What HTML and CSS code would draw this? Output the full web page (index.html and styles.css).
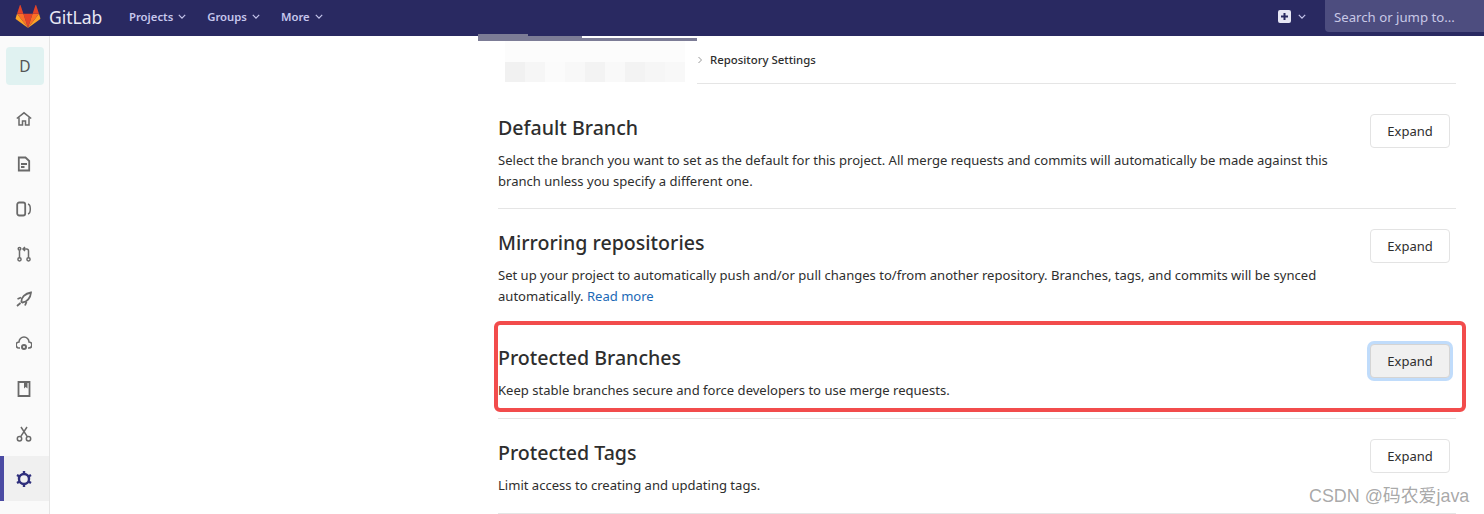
FILE: index.html
```html
<!DOCTYPE html>
<html lang="en">
<head>
    <meta charset="UTF-8">
    <title>Repository Settings</title>
    <link rel="stylesheet" href="styles.css">
</head>
<body>
    <header class="navbar">
        <div class="brand">
            <svg class="logo" viewBox="0 0 36 36" width="26" height="25">
                <path fill="#e24329" d="M18 34.500 24.600 14.200H11.400z"/>
                <path fill="#fc6d26" d="M18 34.500 11.400 14.200H2.200z"/>
                <path fill="#fca326" d="M2.200 14.200.2 20.400c-.2.600 0 1.200.5 1.500L18 34.500z"/>
                <path fill="#e24329" d="M2.200 14.200h9.200L7.400 2c-.2-.6-1.100-.6-1.300 0z"/>
                <path fill="#fc6d26" d="M18 34.500 24.600 14.200h9.200z"/>
                <path fill="#fca326" d="M33.800 14.200l2 6.200c.2.600 0 1.200-.5 1.500L18 34.500z"/>
                <path fill="#e24329" d="M33.800 14.200h-9.200L28.600 2c.2-.6 1.100-.6 1.300 0z"/>
            </svg>
            <span class="brand-name">GitLab</span>
        </div>
        <nav class="nav-links">
            <a class="nav-link">Projects <svg class="chev" viewBox="0 0 10 6"><path d="M1 1l4 4 4-4"/></svg></a>
            <a class="nav-link">Groups <svg class="chev" viewBox="0 0 10 6"><path d="M1 1l4 4 4-4"/></svg></a>
            <a class="nav-link">More <svg class="chev" viewBox="0 0 10 6"><path d="M1 1l4 4 4-4"/></svg></a>
        </nav>
        <div class="nav-right">
            <div class="new-menu">
                <svg class="plus" viewBox="0 0 13 13" width="13" height="13"><path fill-rule="evenodd" fill="#e6e6f4" d="M2 0h9a2 2 0 0 1 2 2v9a2 2 0 0 1-2 2H2a2 2 0 0 1-2-2V2a2 2 0 0 1 2-2zm3.500 3v2.500H3v2h2.500V10h2V7.500H10v-2H7.500V3z"/></svg>
                <svg class="chev" viewBox="0 0 10 6"><path d="M1 1l4 4 4-4"/></svg>
            </div>
            <div class="search">Search or jump to...</div>
        </div>
    </header>

    <div class="page">
        <aside class="sidebar">
            <div class="avatar">D</div>
            <ul class="side-list">
                <li class="side-item">
                    <svg viewBox="0 0 16 16"><path d="M.8 7.500 8 1.800l7.200 5.700M3 6.500V14h3.500v-4h3v4H13V6.500"/></svg>
                </li>
                <li class="side-item">
                    <svg viewBox="0 0 16 16"><path d="M2.800 1.500h6.700L13.200 5v9.500H2.800zM5 8h6M5 11h3.500" stroke-width="1.800"/></svg>
                </li>
                <li class="side-item">
                    <svg viewBox="0 0 16 16"><rect x="1.200" y="1.500" width="8" height="13" rx="2" stroke-width="1.800"/><path d="M12 3c1.800.5 2.300 2 2.300 5s-.5 4.500-2.300 5"/></svg>
                </li>
                <li class="side-item">
                    <svg viewBox="0 0 16 16"><circle cx="3.500" cy="13.300" r="1.600"/><circle cx="12.500" cy="13.300" r="1.600"/><circle cx="3.500" cy="2.800" r="1.300"/><path d="M3.500 4.300v7.400M12.500 11.700V5a2 2 0 0 0-2-2H7M9 1 7 3l2 2"/></svg>
                </li>
                <li class="side-item">
                    <svg viewBox="0 0 16 16"><path d="M5.500 11C5 6.500 9 2.500 15 1.500 14.500 7 11 11 6.500 11.500zM5 6.500 1.500 8M10.500 11l-1.500 3.500M1 15l3.500-3" stroke-width="1.800"/></svg>
                </li>
                <li class="side-item">
                    <svg viewBox="0 0 16 16"><path d="M4 12H3.300a3 3 0 0 1-.3-6A5 5 0 0 1 13 6a3 3 0 0 1-.3 6H12"/><circle cx="8" cy="11" r="2" stroke-width="2"/></svg>
                </li>
                <li class="side-item">
                    <svg viewBox="0 0 16 16"><path d="M2.500 1h11v14h-11z" stroke-width="1.800"/><path class="solid" d="M8 1h3.500v6.500L9.700 6 8 7.500z"/></svg>
                </li>
                <li class="side-item">
                    <svg viewBox="0 0 16 16"><circle cx="3.500" cy="12.700" r="2.200"/><circle cx="12.500" cy="12.700" r="2.200"/><path d="M4.700 10.700 11 1M11.300 10.700 5 1"/></svg>
                </li>
                <li class="side-item active">
                    <svg viewBox="0 0 16 16"><circle cx="8" cy="8" r="5"/><path d="M8 0v3M8 13v3M1 4l2.500 1.500M12.500 10.500 15 12M1 12l2.500-1.500M12.500 5.500 15 4"/></svg>
                </li>
            </ul>
        </aside>

        <main class="content">
            <div class="crumbs">
                <svg class="crumb-arrow" viewBox="0 0 6 8"><path d="M1.500 1l3 3-3 3"/></svg>
                <span class="crumb-text">Repository Settings</span>
            </div>

            <section class="settings tall first">
                <div class="settings-text">
                    <h4>Default Branch</h4>
                    <p>Select the branch you want to set as the default for this project. All merge requests and commits will automatically be made against this branch unless you specify a different one.</p>
                </div>
                <button class="btn">Expand</button>
            </section>

            <section class="settings tall">
                <div class="settings-text">
                    <h4>Mirroring repositories</h4>
                    <p>Set up your project to automatically push and/or pull changes to/from another repository. Branches, tags, and commits will be synced automatically. <a class="link">Read more</a></p>
                </div>
                <button class="btn">Expand</button>
            </section>

            <section class="settings">
                <div class="settings-text">
                    <h4>Protected Branches</h4>
                    <p>Keep stable branches secure and force developers to use merge requests.</p>
                </div>
                <button class="btn focused">Expand</button>
            </section>

            <section class="settings">
                <div class="settings-text">
                    <h4>Protected Tags</h4>
                    <p>Limit access to creating and updating tags.</p>
                </div>
                <button class="btn">Expand</button>
            </section>
        </main>
    </div>

    <!-- things painted over the screenshot -->
    <div class="redact">
        <div class="redact-line a"></div>
        <div class="redact-line b"></div>
        <div class="redact-line c"></div>
        <div class="mosaic"></div>
    </div>
    <div class="highlight"></div>
    <div class="watermark">CSDN @码农爱java</div>
</body>
</html>
```

FILE: styles.css
```css
*{
    margin: 0;
    padding: 0;
    box-sizing: border-box;
}

html, body{
    height: 514px;
    overflow: hidden;
}

body{
    position: relative;
    background-color: #fff;
    color: #2e2e2e;
    font-family: "Noto Sans", "Open Sans", sans-serif;
    font-size: 13px;
}

.navbar{
    display: flex;
    align-items: center;
    height: 36px;
    background-color: #292961;
}

.brand{
    display: flex;
    align-items: center;
    width: 129px;
    padding: 0 0 3px 15px;
}

.brand-name{
    margin-left: 8px;
    font-size: 17.500px;
    color: #e8e8f4;
}

.nav-links{
    display: flex;
    gap: 21px;
    padding-bottom: 3px;
}

.nav-link{
    display: flex;
    align-items: center;
    gap: 5px;
    font-size: 11.300px;
    font-weight: 600;
    color: #c6c6ec;
}

.chev{
    width: 8px;
    height: 5px;
    fill: none;
    stroke: #c6c6ec;
    stroke-width: 1.500;
}

.nav-right{
    display: flex;
    align-items: center;
    align-self: flex-start;
    margin-left: auto;
    height: 32px;
}

.new-menu{
    display: flex;
    align-items: center;
    gap: 7px;
    margin-right: 19px;
}

.search{
    width: 159px;
    height: 32px;
    padding-left: 9px;
    border-radius: 0 0 0 4px;
    background-color: #4d4d7f;
    color: #c8c8e6;
    font-size: 13.200px;
    line-height: 34px;
}

.page{
    display: flex;
    height: 478px;
}

.sidebar{
    width: 50px;
    flex-shrink: 0;
    background-color: #fafafa;
    border-right: 1px solid #e5e5e5;
}

.avatar{
    display: flex;
    align-items: center;
    justify-content: center;
    width: 38px;
    height: 38px;
    margin: 11px 0 0 6px;
    border-radius: 4px;
    background-color: #e0f2f1;
    color: #555;
    font-size: 15.500px;
}

.side-list{
    list-style: none;
    margin-top: 11px;
}

.side-item{
    display: flex;
    align-items: center;
    justify-content: center;
    height: 45px;
    padding-right: 1px;
}

.side-item svg{
    width: 16px;
    height: 16px;
    fill: none;
    stroke: #6a6a6a;
    stroke-width: 1.500;
}

.side-item .solid{
    fill: #6a6a6a;
    stroke: none;
}

.side-item.active{
    background-color: #f0f0f0;
    border-left: 4px solid #4b4ba3;
    padding-right: 5px;
}

.side-item.active svg{
    stroke: #2f2f7c;
    stroke-width: 2.400;
}

.content{
    width: 958px;
    margin-left: 448px;
}

.crumbs{
    display: flex;
    align-items: center;
    height: 48px;
    padding-left: 199px;
    border-bottom: 1px solid #e5e5e5;
    font-size: 11.400px;
    font-weight: 500;
}

.crumb-arrow{
    width: 6px;
    height: 8px;
    margin-right: 7px;
    fill: none;
    stroke: #999;
}

.settings{
    display: flex;
    justify-content: space-between;
    align-items: flex-start;
    height: 95px;
    padding-top: 20px;
    border-bottom: 1px solid #e5e5e5;
}

.settings.tall{
    height: 115px;
}

.settings.first{
    margin-top: 10px;
}

.settings-text{
    width: 850px;
}

.settings h4{
    height: 30px;
    font-size: 19.600px;
    font-weight: 500;
    line-height: 28px;
    color: #2e2e2e;
}

.settings p{
    margin-top: 6px;
    font-size: 13.050px;
    line-height: 21px;
}

.link{
    color: #1b69b6;
}

.btn{
    width: 80px;
    height: 34px;
    margin-right: 6px;
    border: 1px solid #e3e3e3;
    border-radius: 4px;
    background-color: #fff;
    color: #2e2e2e;
    font-family: inherit;
    font-size: 13px;
}

.btn.focused{
    background-color: #f0f0f0;
    box-shadow: 0 0 0 3px #c0dcfb;
    border-color: #d4d4d4;
}

.redact{
    position: absolute;
    left: 478px;
    top: 34px;
    width: 219px;
    height: 50px;
}

.redact-line{
    position: absolute;
    left: 0;
    background-color: #7c7c96;
}

.redact-line.a{
    top: 0;
    width: 50px;
    height: 7px;
}

.redact-line.b{
    top: 2px;
    width: 104px;
    height: 5px;
}

.redact-line.c{
    top: 4px;
    width: 219px;
    height: 3px;
}

.mosaic{
    position: absolute;
    top: 7px;
    left: 0;
    width: 219px;
    height: 43px;
    background-color: #fff;
    background-image:
        linear-gradient(90deg, #fff 27px, #f1f1f1 27px, #f1f1f1 47px, #f6f6f6 47px, #f6f6f6 67px, #fbfbfb 67px, #fbfbfb 87px, #f8f8f8 87px, #f8f8f8 107px, #f3f3f3 107px, #f3f3f3 127px, #f9f9f9 127px, #f9f9f9 147px, #f3f3f3 147px, #f3f3f3 167px, #f6f6f6 167px, #f6f6f6 187px, #f8f8f8 187px, #f8f8f8 207px, #fff 207px),
        linear-gradient(90deg, #fff 27px, #fcfcfc 27px, #fcfcfc 207px, #fff 207px);
    background-size: 100% 20px, 100% 21px;
    background-position: 0 21px, 0 0;
    background-repeat: no-repeat;
}

.highlight{
    position: absolute;
    left: 494px;
    top: 321px;
    width: 972px;
    height: 91px;
    border: 4px solid #f24c4c;
    border-radius: 6px;
}

.watermark{
    position: absolute;
    left: 1309px;
    top: 481px;
    font-family: "Liberation Sans", "Noto Sans CJK SC", sans-serif;
    font-size: 17.900px;
    color: rgba(120, 120, 120, 0.650);
}
```
